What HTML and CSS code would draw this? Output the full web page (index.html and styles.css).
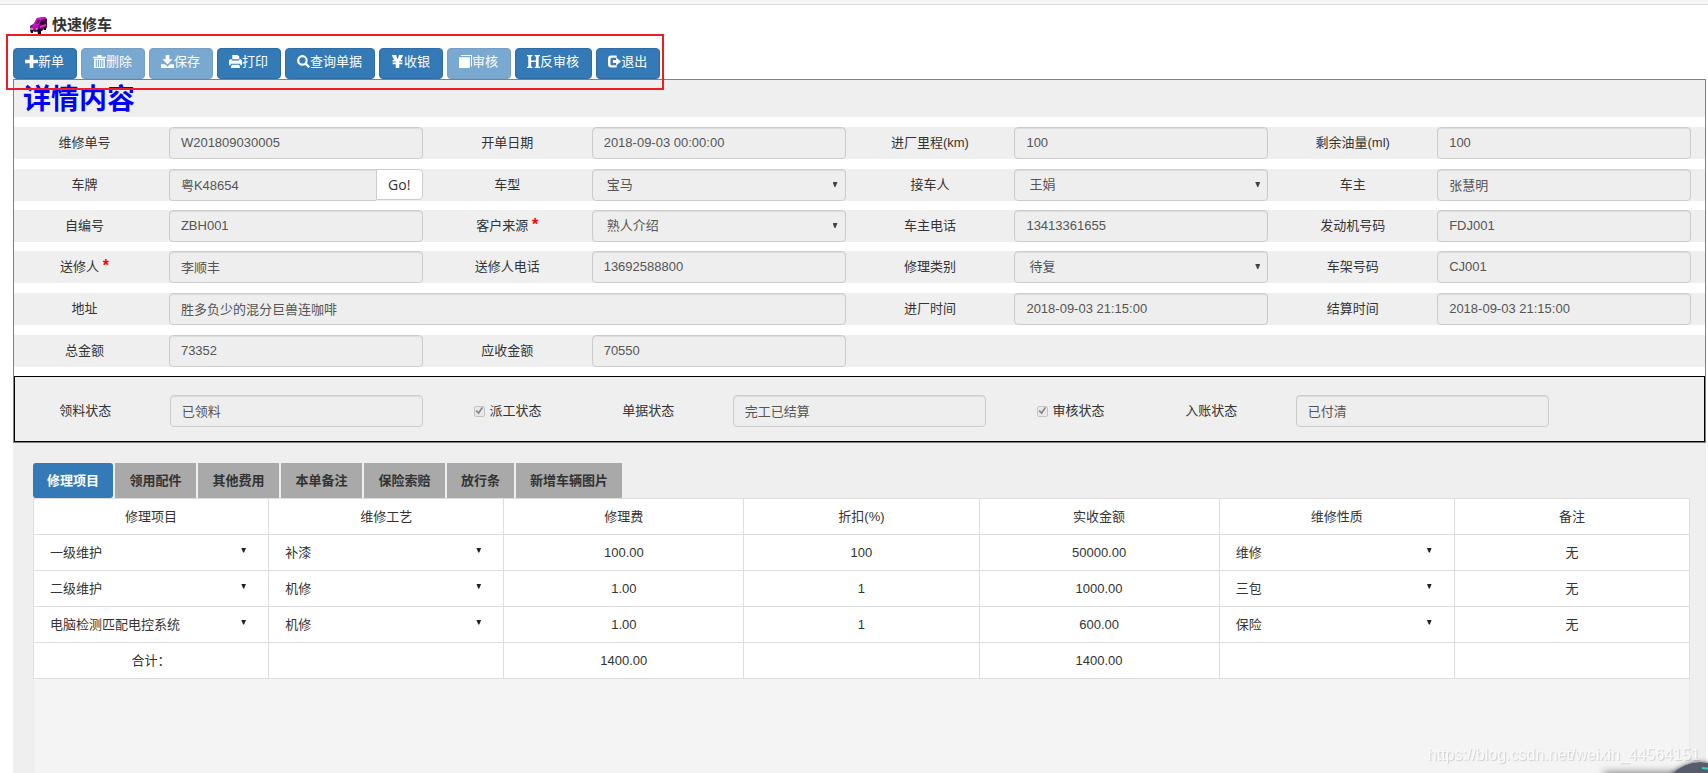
FILE: index.html
```html
<!DOCTYPE html>
<html lang="zh-CN">
<head>
<meta charset="utf-8">
<title>快速修车</title>
<link rel="stylesheet" href="styles.css">
</head>
<body>
<div class="topbar"></div>
<header class="page-head">
  <svg class="car" viewBox="0 0 18 17" aria-hidden="true">
    <path d="M1 9 5 6.500 8 1l8-1 2 2v8l-1 2h-2l-2 2-7 1-5-2z" fill="#4d0a50"/>
    <path d="M8 1l7-1 2 1.500-5 1.500-2 5-8 2 3-3.500z" fill="#d414cf"/>
    <path d="M8.500 2.500 6.500 6.500 9.500 7 11.500 3z" fill="#7c107b"/>
    <path d="M1 10l8-1.500 1 1.500-3 3-6-.5z" fill="#b415b1"/>
    <path d="M12 5l4-1v3l-4 1z" fill="#2b0730"/>
    <path d="M11 9l6-2v2l-6 2z" fill="#e61fe0"/>
    <path d="M1 11.500h3v1H1zM7 11.500h2v1H7z" fill="#f5d5f4"/>
    <path d="M1 13h3v3H2zM8 12.500h4V17H9zM15 10h2v3h-2z" fill="#120514"/>
  </svg>
  <h1>快速修车</h1>
</header>
<nav class="toolbar" aria-label="操作">
  <button type="button" class="btn"><svg viewBox="0 0 12 12"><path d="M4.300 0h3.400v4.300H12v3.400H7.700V12H4.300V7.700H0V4.300h4.300z"/></svg>新单</button>
  <button type="button" class="btn" disabled><svg viewBox="0 0 12 12"><path fill-rule="evenodd" d="M4 0h4v1.500h4V3H0V1.500h4zM1 3.500h10V12H1zM2.500 4.500v6.500h1V4.500zM4.600 4.500v6.500h1V4.500zM6.600 4.500v6.500h1V4.500zM8.600 4.500v6.500h1V4.500z"/></svg>删除</button>
  <button type="button" class="btn" disabled><svg viewBox="0 0 12 12"><path d="M4.300 0h3.400v4h3L6 8.700 1.300 4h3zM0 8.500h3.500L6 10.500l2.500-2H12V12H0z"/></svg>保存</button>
  <button type="button" class="btn"><svg viewBox="0 0 12 12"><path fill-rule="evenodd" d="M3 0h5l1.500 1.500V4H3zM0 5l1-1h1.500v1h7V4H11l1 1v4.500h-1.500V8h-9v1.500H0zM2.500 9h7l.8 3H1.700z"/></svg>打印</button>
  <button type="button" class="btn"><svg viewBox="0 0 12 12"><circle cx="5" cy="5" r="3.900" fill="none" stroke="#fff" stroke-width="2"/><path d="M7 8.500 8.500 7l3.500 3.500L10.500 12z"/></svg>查询单据</button>
  <button type="button" class="btn"><svg viewBox="0 0 12 12"><path d="M1 0h4v1L6 3.800 7.300 1V0H11v1L9 4.500h1.500V6H7.600v1h2.900v1.500H7.600V12H4.400V8.500H1.500V7h2.900V6H1.500V4.500H3L1 1z"/></svg>收银</button>
  <button type="button" class="btn" disabled><svg viewBox="0 0 12 12"><path d="M2 0h10v10.500h-1V1H1.500zM0 2h10v10H0z"/></svg>审核</button>
  <button type="button" class="btn"><svg viewBox="0 0 12 12"><path d="M0 0h5v1l-1.200.5V5h4.400V1.500L7 1V0h5v1l-1.300.5v9L12 11v1H7v-1l1.200-.5V6.500H3.800v4L5 11v1H0v-1l1.200-.5v-9L0 1z"/></svg>反审核</button>
  <button type="button" class="btn"><svg viewBox="0 0 12 12"><path d="M8 .5v2H3.500Q2.300 2.500 2.300 4v4Q2.300 9.500 3.500 9.500H8v2H3Q0 11.500 0 8.500V3.500Q0 .5 3 .5zM7.500 2.300 12 6 7.500 9.700V7.400H4.500V4.600h3z"/></svg>退出</button>
  <span class="marker"></span>
</nav>

<form class="panel">
  <h2 class="panel-title">详情内容</h2>
  <div class="row loose">
    <label for="f1">维修单号</label><div class="field"><input id="f1" class="ctl" disabled value="W201809030005"></div>
    <label for="f2">开单日期</label><div class="field"><input id="f2" class="ctl" disabled value="2018-09-03 00:00:00"></div>
    <label for="f3">进厂里程(km)</label><div class="field"><input id="f3" class="ctl" disabled value="100"></div>
    <label for="f4">剩余油量(ml)</label><div class="field"><input id="f4" class="ctl" disabled value="100"></div>
  </div>
  <div class="row loose">
    <label for="f5">车牌</label><div class="field group"><input id="f5" class="ctl" disabled value="粤K48654"><button type="button" class="go">Go!</button></div>
    <label for="f6">车型</label><div class="field"><span class="pick"><select id="f6" class="ctl" disabled><option>宝马</option></select></span></div>
    <label for="f7">接车人</label><div class="field"><span class="pick"><select id="f7" class="ctl" disabled><option>王娟</option></select></span></div>
    <label for="f8">车主</label><div class="field"><input id="f8" class="ctl" disabled value="张慧明"></div>
  </div>
  <div class="row">
    <label for="f9">自编号</label><div class="field"><input id="f9" class="ctl" disabled value="ZBH001"></div>
    <label for="f10">客户来源 <b class="req">*</b></label><div class="field"><span class="pick"><select id="f10" class="ctl" disabled><option>熟人介绍</option></select></span></div>
    <label for="f11">车主电话</label><div class="field"><input id="f11" class="ctl" disabled value="13413361655"></div>
    <label for="f12">发动机号码</label><div class="field"><input id="f12" class="ctl" disabled value="FDJ001"></div>
  </div>
  <div class="row">
    <label for="f13">送修人 <b class="req">*</b></label><div class="field"><input id="f13" class="ctl" disabled value="李顺丰"></div>
    <label for="f14">送修人电话</label><div class="field"><input id="f14" class="ctl" disabled value="13692588800"></div>
    <label for="f15">修理类别</label><div class="field"><span class="pick"><select id="f15" class="ctl" disabled><option>待复</option></select></span></div>
    <label for="f16">车架号码</label><div class="field"><input id="f16" class="ctl" disabled value="CJ001"></div>
  </div>
  <div class="row loose">
    <label for="f17">地址</label><div class="field wide"><input id="f17" class="ctl" disabled value="胜多负少的混分巨兽连咖啡"></div>
    <label for="f18">进厂时间</label><div class="field"><input id="f18" class="ctl" disabled value="2018-09-03 21:15:00"></div>
    <label for="f19">结算时间</label><div class="field"><input id="f19" class="ctl" disabled value="2018-09-03 21:15:00"></div>
  </div>
  <div class="row loose">
    <label for="f20">总金额</label><div class="field"><input id="f20" class="ctl" disabled value="73352"></div>
    <label for="f21">应收金额</label><div class="field"><input id="f21" class="ctl" disabled value="70550"></div>
  </div>
  <div class="status">
    <label for="s1">领料状态</label><div class="field"><input id="s1" class="ctl" disabled value="已领料"></div>
    <label class="check"><input type="checkbox" checked disabled>派工状态</label>
    <label for="s2">单据状态</label><div class="field"><input id="s2" class="ctl" disabled value="完工已结算"></div>
    <label class="check"><input type="checkbox" checked disabled>审核状态</label>
    <label for="s3">入账状态</label><div class="field"><input id="s3" class="ctl" disabled value="已付清"></div>
  </div>
</form>

<main class="lower">
  <div class="sheet">
    <div class="tabs" role="tablist">
      <button type="button" role="tab" class="tab active" aria-selected="true">修理项目</button>
      <button type="button" role="tab" class="tab">领用配件</button>
      <button type="button" role="tab" class="tab">其他费用</button>
      <button type="button" role="tab" class="tab">本单备注</button>
      <button type="button" role="tab" class="tab">保险索赔</button>
      <button type="button" role="tab" class="tab short">放行条</button>
      <button type="button" role="tab" class="tab">新增车辆图片</button>
    </div>
    <table class="items">
      <colgroup><col class="c-std"><col class="c-std"><col class="c-fee"><col class="c-std"><col class="c-fee"><col class="c-std"><col class="c-std"></colgroup>
      <thead><tr><th>修理项目</th><th>维修工艺</th><th>修理费</th><th>折扣(%)</th><th>实收金额</th><th>维修性质</th><th>备注</th></tr></thead>
      <tbody>
        <tr>
          <td><span class="cell-pick"><select aria-label="修理项目"><option>一级维护</option></select></span></td>
          <td><span class="cell-pick"><select aria-label="维修工艺"><option>补漆</option></select></span></td>
          <td>100.00</td><td>100</td><td>50000.00</td>
          <td><span class="cell-pick"><select aria-label="维修性质"><option>维修</option></select></span></td>
          <td>无</td>
        </tr>
        <tr>
          <td><span class="cell-pick"><select aria-label="修理项目"><option>二级维护</option></select></span></td>
          <td><span class="cell-pick"><select aria-label="维修工艺"><option>机修</option></select></span></td>
          <td>1.00</td><td>1</td><td>1000.00</td>
          <td><span class="cell-pick"><select aria-label="维修性质"><option>三包</option></select></span></td>
          <td>无</td>
        </tr>
        <tr>
          <td><span class="cell-pick"><select aria-label="修理项目"><option>电脑检测匹配电控系统</option></select></span></td>
          <td><span class="cell-pick"><select aria-label="维修工艺"><option>机修</option></select></span></td>
          <td>1.00</td><td>1</td><td>600.00</td>
          <td><span class="cell-pick"><select aria-label="维修性质"><option>保险</option></select></span></td>
          <td>无</td>
        </tr>
        <tr><td>合计：</td><td></td><td>1400.00</td><td></td><td>1400.00</td><td></td><td></td></tr>
      </tbody>
    </table>
    <div class="rest"></div>
  </div>
</main>
<div class="watermark">https://blog.csdn.net/weixin_44564151</div>
<div class="glow"></div>
<div class="orb"><svg viewBox="0 0 76 76"><circle cx="38" cy="38" r="38" fill="#575c6c"/><path d="M40 6q7 0 13 3" fill="none" stroke="#35d0cb" stroke-width="2"/></svg></div>
</body>
</html>
```
FILE: styles.css
```css
* { box-sizing: border-box; }
body {
  margin: 0;
  min-height: 100vh;
  overflow: hidden;
  display: flex;
  flex-direction: column;
  background: #fff;
  color: #333;
  font: 13px/18px "Liberation Sans", "Noto Sans CJK SC", sans-serif;
}
button, input, select { font: inherit; color: inherit; margin: 0; }

.topbar { height: 5px; background: #f5f5f5; border-bottom: 1px solid #ddd; }
.page-head { display: flex; align-items: center; gap: 5px; height: 43px; padding: 0 0 3px 29px; }
.page-head h1 { margin: 0; font-size: 15px; line-height: 20px; font-weight: 700; }
.car { width: 18px; height: 17px; }

.toolbar { position: relative; display: flex; gap: 4px; width: max-content; margin-left: 13px; }
.btn {
  display: flex; align-items: center;
  height: 31px; padding: 0 12px 5px 11px;
  border: 1px solid #2e6da4; border-radius: 4px;
  background: #337ab7; color: #fff;
  font-family: "Noto Sans CJK SC", sans-serif;
}
.btn:disabled { opacity: .65; }
.btn svg { width: 13px; height: 13px; fill: #fff; }
.marker {
  position: absolute; inset: -14px -4px -11px -7px;
  border: 2px solid #ee1c24; pointer-events: none; z-index: 2;
}

.panel { margin: 0 2px 0 13px; border: 1px solid #808080; }
.panel-title {
  margin: 0; padding: 0 9px; height: 37px;
  background: #efefef; color: #00f;
  font-size: 28px; line-height: 40px; font-weight: 700;
}
.row, .status { display: grid; grid-template-columns: repeat(12, minmax(0, 1fr)); align-items: center; background: #efefef; }
.row { margin-top: 9px; }
.row.loose { margin-top: 10px; }
.row > label, .status > label { text-align: center; white-space: nowrap; }
.req { color: #f00; font-size: 16px; line-height: 16px; }
.field { grid-column: span 2; display: flex; padding: 0 14px; min-width: 0; }
.field.wide { grid-column: span 5; }
.ctl {
  flex: 1; min-width: 0; width: 100%; height: 32px; padding: 0 11px 2px;
  border: 1px solid #ccc; border-radius: 4px;
  background: #eee; color: #555; opacity: 1;
  box-shadow: inset 0 1px 1px rgba(0, 0, 0, .075);
}
select { appearance: none; }
select.ctl { padding: 0 14px; }
.pick, .cell-pick { position: relative; display: flex; width: 100%; }
.pick::after, .cell-pick::after {
  content: ""; position: absolute; right: 8px; top: 13px;
  width: 5px; height: 5px; background: #444; pointer-events: none;
  clip-path: polygon(0 0, 100% 0, 60% 100%, 40% 100%);
}
.group .ctl { border-radius: 4px 0 0 4px; border-right: 0; }
.go {
  width: 47px; height: 31px; padding: 0;
  border: 1px solid #ccc; border-radius: 0 4px 4px 0; background: #fff;
  font: 14px/20px "Open Sans", sans-serif;
}

.status { margin-top: 9px; padding: 18px 0 14px; border: 1px solid #000; }
.check { display: flex; align-items: center; justify-content: center; gap: 5px; }
.check input {
  appearance: none; width: 11px; height: 11px;
  border: 1px solid #c4c4c4; border-radius: 2px; background: #e9e9e9;
  display: grid; place-items: center;
}
.check input::before {
  content: ""; width: 9px; height: 9px; background: #858585;
  clip-path: polygon(10% 50%, 25% 40%, 42% 58%, 80% 5%, 95% 15%, 45% 90%);
}

.lower { flex: 1; display: flex; flex-direction: column; margin: 0 2px 0 13px; padding: 0 16px 0 20px; background: #efefef; }
.sheet { flex: 1; display: flex; flex-direction: column; padding-top: 20px; }
.tabs { display: flex; gap: 2px; }
.tab { min-width: 81px; height: 35px; padding: 0 14px; border: 0; background: #a9a9a9; color: #333; font-weight: 700; }
.tab.short { min-width: 0; }
.tab.active { min-width: 80px; background: #337ab7; color: #fff; border-radius: 3px; }
.items { width: 100%; border-collapse: collapse; table-layout: fixed; background: #fff; }
.items th, .items td { height: 36px; padding: 0; border: 1px solid #ddd; text-align: center; font-weight: 400; }
.c-std { width: 14.2%; }
.c-fee { width: 14.5%; }
.cell-pick select { width: 100%; height: 28px; padding: 0 24px 0 16px; border: 0; background: transparent; }
.cell-pick::after { right: 22px; top: 9px; background: #222; }
.rest { flex: 1; background: #f4f4f4; border: 1px solid #e6ecf2; border-width: 0 1px; }

.watermark {
  position: fixed; right: 8px; bottom: 9px;
  font-size: 16px; line-height: 18px; color: #fafafa;
  text-shadow: 1px 1px 1px #ccc;
}
.glow { position: fixed; right: 20px; bottom: -8px; width: 84px; height: 8px; box-shadow: 0 0 8px rgba(0, 0, 0, .6); }
.orb { position: fixed; right: -30px; bottom: -65px; width: 76px; height: 76px; border-radius: 50%; box-shadow: 0 0 5px rgba(0, 0, 0, .6); }
.orb svg { display: block; }
```
